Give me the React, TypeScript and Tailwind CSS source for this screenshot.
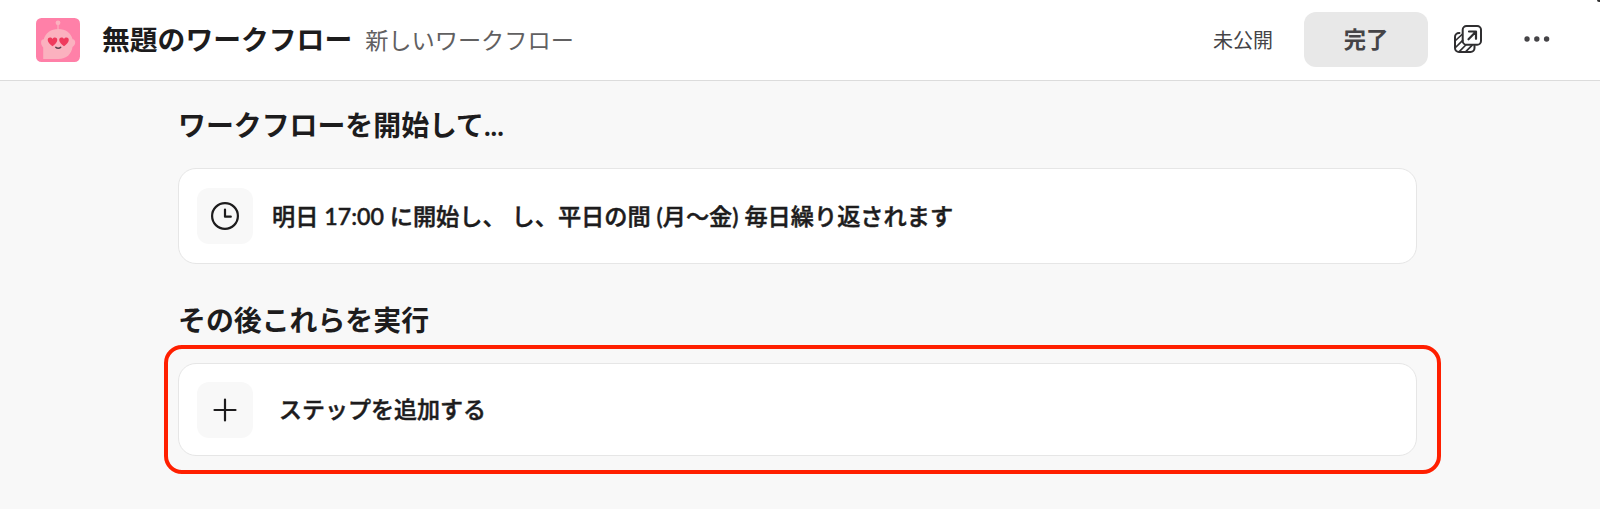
import type { ReactNode } from "react";
import { clsx } from "clsx";

function BotAvatar() {
  return (
    <svg viewBox="0 0 44 44" className="size-11 shrink-0" aria-hidden="true">
      <rect width="44" height="44" rx="5.5" fill="#ff80a8" />
      <circle cx="22" cy="4.8" r="2.4" fill="#fbb1bf" />
      <path d="M22 6v6" stroke="#fbb1bf" strokeWidth="1.2" />
      <path
        d="M7.2 41V29.5C5.8 28 5 26.2 5.1 24c.1-1.6 1-2.7 2.7-2.7C9.5 15 15 11 22.3 11S35 15 36.6 21.3c1.8.2 2.6 1.4 2.6 3 0 2-1 3.6-2.7 4.7C35.5 36 30.5 41 22.5 41Z"
        fill="#fbb1bf"
      />
      <path
        d="M16.5 28.3c-2-1.5-4.8-3.8-4.8-6.3 0-3 3.5-3.2 4.8-1 1.3-2.2 4.8-2 4.8 1 0 2.5-2.8 4.8-4.8 6.3ZM28 28.3c-2-1.5-4.8-3.8-4.8-6.3 0-3 3.5-3.2 4.8-1 1.3-2.2 4.8-2 4.8 1 0 2.5-2.8 4.8-4.8 6.3Z"
        fill="#ef3a5d"
      />
      <path
        d="M19.800 29.300c1.200 1.400 3.700 1.400 4.900 0"
        fill="none"
        stroke="#5a4550"
        strokeWidth="1.5"
        strokeLinecap="round"
      />
    </svg>
  );
}

function PopOutIcon() {
  return (
    <svg
      viewBox="0 0 28 28"
      className="size-7"
      fill="none"
      stroke="currentColor"
      strokeWidth="2"
      strokeLinecap="round"
      strokeLinejoin="round"
      aria-hidden="true"
    >
      <rect x="8.7" y="1" width="18.3" height="18.7" rx="3.8" />
      <path d="M14.5 14.3 21.8 6.8M15 6.5h7v7.3" strokeWidth="2.2" />
      <path d="M5.5 8H5a4 4 0 0 0-4 4v11a4 4 0 0 0 4 4h11.5a4 4 0 0 0 4-4v-2" />
      <path
        d="M1.5 15.500 8 9.500M2 22l6.700-6.700M5.500 26.300l6.300-6.300M12 26.300l6-6"
        strokeWidth="1.700"
      />
    </svg>
  );
}

function MoreIcon() {
  return (
    <svg viewBox="0 0 26 6" className="h-1.5 w-[26px]" fill="currentColor" aria-hidden="true">
      <circle cx="3" cy="3" r="2.7" />
      <circle cx="12.8" cy="3" r="2.7" />
      <circle cx="22.6" cy="3" r="2.7" />
    </svg>
  );
}

function ClockIcon() {
  return (
    <svg
      viewBox="0 0 28 28"
      className="size-7"
      fill="none"
      stroke="currentColor"
      strokeWidth="2.2"
      strokeLinecap="round"
      strokeLinejoin="round"
      aria-hidden="true"
    >
      <circle cx="14" cy="14" r="12.9" />
      <path d="M14 7.5v7.2h5.8" />
    </svg>
  );
}

function PlusIcon() {
  return (
    <svg
      viewBox="0 0 24 24"
      className="size-6"
      stroke="currentColor"
      strokeWidth="2.2"
      strokeLinecap="round"
      aria-hidden="true"
    >
      <path d="M12 1.5v21M1.5 12h21" />
    </svg>
  );
}

type StepCardProps = {
  icon: ReactNode;
  className?: string;
  children: ReactNode;
};

function StepCard({ icon, className, children }: StepCardProps) {
  return (
    <div
      className={clsx(
        "flex items-center rounded-[18px] border border-[#e6e6e6] bg-white pl-[18px] font-medium text-[#1d1c1d] [-webkit-text-stroke:0.5px_#1d1c1d]",
        className
      )}
    >
      <span className="flex size-14 shrink-0 items-center justify-center rounded-xl bg-[#f8f8f8]">
        {icon}
      </span>
      {children}
    </div>
  );
}

export default function App() {
  return (
    <div className="relative h-[509px] overflow-hidden bg-[#f8f8f8] font-['Lato','Noto_Sans_CJK_JP',sans-serif] text-[#1d1c1d]">
      <header className="flex h-[81px] items-center border-b border-[#dcdcdc] bg-white pr-[50px] pl-9">
        <BotAvatar />
        <h1 className="ml-[22px] text-[27.8px] leading-10 font-bold whitespace-nowrap">
          無題のワークフロー
        </h1>
        <span className="ml-[13px] text-[23.2px] leading-10 whitespace-nowrap text-[#616061]">
          新しいワークフロー
        </span>
        <div className="ml-auto flex items-center text-[#454447]">
          <span className="text-[20px] whitespace-nowrap">未公開</span>
          <button
            type="button"
            className="mb-0.5 ml-[31px] h-[55px] w-[124px] rounded-xl bg-[#e8e8e8] pt-0.5 text-[22.3px] font-bold"
          >
            完了
          </button>
          <button type="button" className="mb-0.5 ml-[26px] text-[#2f2e30]">
            <PopOutIcon />
          </button>
          <button type="button" className="mb-0.5 ml-[42px]">
            <MoreIcon />
          </button>
        </div>
      </header>

      <main className="ml-[178px] w-[1239px]">
        <h2 className="pt-6 text-[27.9px] leading-10 font-bold">
          ワークフローを開始して...
        </h2>
        <StepCard icon={<ClockIcon />} className="mt-[23px] h-24 text-[23.2px]">
          <span className="ml-[19px] whitespace-nowrap">
            明日 17:00 に開始し、 し、平日の間 (月〜金) 毎日繰り返されます
          </span>
        </StepCard>

        <h2 className="mt-9 text-[27.9px] leading-10 font-bold">その後これらを実行</h2>
        <div className="relative mt-[23px]">
          <StepCard icon={<PlusIcon />} className="h-[93px] text-[23px]">
            <span className="ml-[26px] whitespace-nowrap">ステップを追加する</span>
          </StepCard>
          <div className="pointer-events-none absolute -top-[18px] -right-6 -bottom-[18px] -left-3.5 rounded-[18px] border-4 border-[#ff1f00]" />
        </div>
      </main>

      {/* window corner */}
      <span className="absolute top-0 right-0 h-0.5 w-[3px] rounded-bl-full bg-[#333]" />
    </div>
  );
}
